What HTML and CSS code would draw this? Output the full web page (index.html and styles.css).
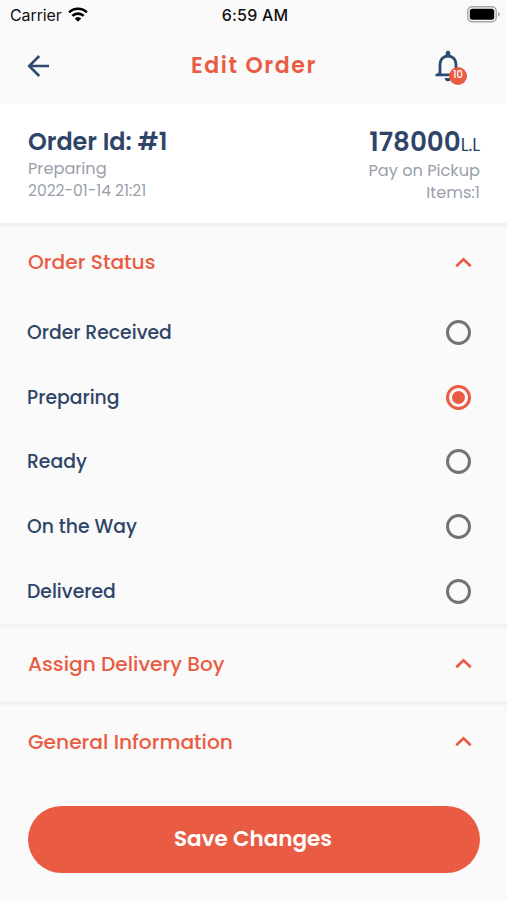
FILE: index.html
```html
<!DOCTYPE html>
<html lang="en">
<head>
<meta charset="utf-8">
<meta name="viewport" content="width=device-width, initial-scale=1">
<title>Edit Order</title>
<link rel="stylesheet" href="styles.css">
</head>
<body>
<div class="status-bar">
  <div class="carrier"><span class="carrier-name">Carrier</span>
    <svg class="wifi" viewBox="0 0 20 15"><path d="M1.1 5.4a12.6 12.6 0 0 1 17.8 0M4.3 8.9a8.2 8.2 0 0 1 11.4 0" fill="none" stroke="#000" stroke-width="2.6"/><path d="M10 14.7 6.7 11.5a4.8 4.8 0 0 1 6.6 0z"/></svg>
  </div>
  <div class="clock">6:59 AM</div>
  <svg class="battery" viewBox="0 0 33 17"><rect x=".8" y=".8" width="28.4" height="15" rx="4.3" fill="none" stroke="#a5a5a5" stroke-width="1.4"/><rect x="2.8" y="2.8" width="24.4" height="11" rx="2.5"/><path d="M31 6v4.6q1.8-.7 1.8-2.3T31 6z" fill="#a5a5a5"/></svg>
</div>
<header class="app-bar">
  <svg class="back" viewBox="0 0 24 24"><path d="M22 12H3M12.2 2 2.2 12l10 10" fill="none" stroke="#2f4a70" stroke-width="2.5"/></svg>
  <h1 class="title">Edit Order</h1>
  <div class="bell-wrap">
    <svg class="bell" viewBox="0 0 26 32"><path d="M5 24.5V14a8 8 0 0 1 16 0v10.5" fill="none" stroke="#2f4a70" stroke-width="2.8"/><path d="M10.7 6V3a2.3 2.3 0 0 1 4.6 0V6zM.5 26.2v-2L3.6 22.5V23.6H22.4V22.5L25.5 24.2v2zM9.8 28h6.4a3.2 3.2 0 0 1-6.4 0z" fill="#2f4a70"/></svg>
    <span class="badge">10</span>
  </div>
</header>
<section class="summary">
  <div class="summary-left">
    <div class="order-id">Order Id: #1</div>
    <div class="meta">Preparing</div>
    <div class="meta date">2022-01-14 21:21</div>
  </div>
  <div class="summary-right">
    <div class="amount">178000<span class="currency">L.L</span></div>
    <div class="meta">Pay on Pickup</div>
    <div class="meta">Items:1</div>
  </div>
</section>
<main>
  <section class="panel panel-status">
    <div class="panel-head"><h2>Order Status</h2><svg class="chevron" viewBox="0 0 17 11"><path d="M1.3 9.3 8.5 2.3l7.2 7"/></svg></div>
    <div class="options">
      <label class="option"><span>Order Received</span><i class="radio"></i></label>
      <label class="option"><span>Preparing</span><i class="radio checked"></i></label>
      <label class="option"><span>Ready</span><i class="radio"></i></label>
      <label class="option"><span>On the Way</span><i class="radio"></i></label>
      <label class="option"><span>Delivered</span><i class="radio"></i></label>
    </div>
  </section>
  <section class="panel panel-assign">
    <div class="panel-head"><h2>Assign Delivery Boy</h2><svg class="chevron" viewBox="0 0 17 11"><path d="M1.3 9.3 8.5 2.3l7.2 7"/></svg></div>
  </section>
  <section class="panel panel-general">
    <div class="panel-head"><h2>General Information</h2><svg class="chevron" viewBox="0 0 17 11"><path d="M1.3 9.3 8.5 2.3l7.2 7"/></svg></div>
  </section>
</main>
<button class="save"><span>Save Changes</span></button>
</body>
</html>
```
FILE: styles.css
```css
* { box-sizing: border-box; }
body {
  margin: 0;
  height: 900px;
  overflow: hidden;
  background: #fafafa;
  color: #2f4567;
  font-family: Poppins, Inter, sans-serif;
  white-space: nowrap;
}
h1, h2 { margin: 0; }
svg { display: block; flex: none; }

.status-bar {
  display: grid;
  grid-template-columns: 1fr auto 1fr;
  align-items: center;
  height: 30px;
  padding: 0 7px 0 10px;
  color: #111;
  font-family: Inter, sans-serif;
  font-size: 16px;
}
.carrier { display: flex; align-items: center; gap: 6px; }
.carrier-name { letter-spacing: -.1px; }
.wifi { width: 20px; height: 15px; margin-top: -1px; }
.clock { font-weight: 500; letter-spacing: .2px; }
.battery { width: 33px; height: 17px; justify-self: end; margin-top: -2px; }

.app-bar {
  display: flex;
  align-items: center;
  justify-content: space-between;
  height: 74px;
  padding: 0 46px 0 27px;
}
.back { width: 24px; height: 24px; margin-top: -2px; }
.title {
  color: #e95c43;
  font-size: 22px;
  font-weight: 600;
  letter-spacing: 1.6px;
  margin: -3px 0 0 22px;
}
.bell-wrap { position: relative; width: 26px; height: 32px; margin-top: -2px; }
.bell { width: 26px; height: 32px; }
.badge {
  position: absolute;
  left: 14px;
  top: 17px;
  width: 18px;
  height: 18px;
  border-radius: 50%;
  background: #e95c43;
  color: #fff;
  font-size: 10px;
  font-weight: 500;
  line-height: 15px;
  text-align: center;
}

.summary {
  display: flex;
  justify-content: space-between;
  height: 119px;
  padding: 22px 27px 0 28px;
  background: #fff;
}
.order-id, .amount {
  height: 32px;
  line-height: 32px;
  font-size: 24px;
  font-weight: 600;
}
.order-id { font-size: 23.9px; }
.amount { font-size: 26.2px; }
.summary-right { text-align: right; }
.currency { font-size: 18px; font-weight: 400; }
.meta { height: 22px; line-height: 22px; font-size: 16.2px; color: #9a9fab; }
.date { font-size: 15.5px; }
.summary-right .meta { position: relative; top: 2px; }

.panel {
  padding-top: 3px;
  background: linear-gradient(#efefef, #f1f2f2 2px, #fafafa 5px) no-repeat top / 100% 5px;
}
.panel-head {
  display: flex;
  align-items: center;
  justify-content: space-between;
  height: 73px;
  padding: 0 35px 0 28px;
}
.panel-status .panel-head { height: 72px; }
.panel-head h2 { color: #e95c43; font-size: 20.2px; font-weight: 500; }
.chevron { width: 17px; height: 11px; }
.chevron path { fill: none; stroke: #e95c43; stroke-width: 2.7; }
.options { height: 326px; padding-top: 2px; }
.option {
  display: flex;
  align-items: center;
  justify-content: space-between;
  height: 64.75px;
  padding: 0 36px 0 27px;
  font-size: 18.8px;
  font-weight: 500;
}
.radio {
  display: grid;
  place-items: center;
  width: 25px;
  height: 25px;
  border: 3px solid #737373;
  border-radius: 50%;
}
.radio.checked { border-color: #e95c43; }
.radio.checked::after {
  content: "";
  width: 13px;
  height: 13px;
  border-radius: 50%;
  background: #e95c43;
}
.panel-assign { height: 78px; }
.panel-general { height: 104px; }
.save {
  display: block;
  width: 452px;
  height: 67px;
  margin: 0 0 0 28px;
  padding: 0 2px 2px 0;
  border: 0;
  border-radius: 34px;
  background: #e95c43;
  color: #fff;
  font: 600 21.5px Poppins, Inter, sans-serif;
}
```
